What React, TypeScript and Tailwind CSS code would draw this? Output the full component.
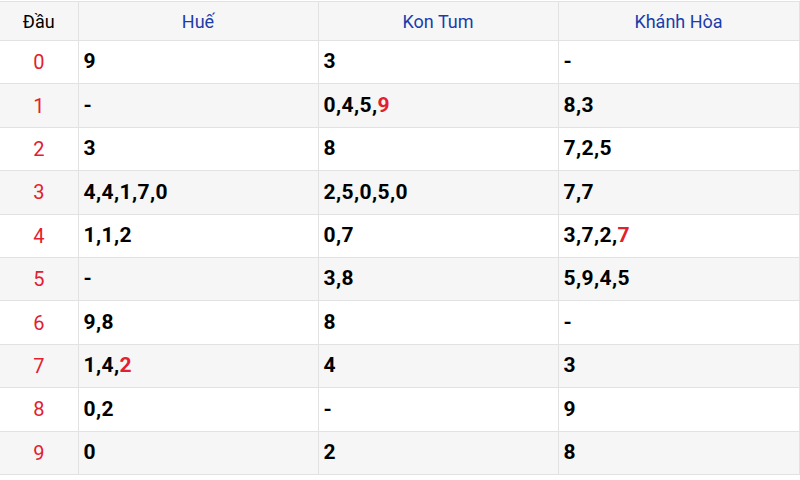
const rows: { head: string; cells: (string | [string, string])[] }[] = [
  { head: "0", cells: ["9", "3", "-"] },
  { head: "1", cells: ["-", ["0,4,5,", "9"], "8,3"] },
  { head: "2", cells: ["3", "8", "7,2,5"] },
  { head: "3", cells: ["4,4,1,7,0", "2,5,0,5,0", "7,7"] },
  { head: "4", cells: ["1,1,2", "0,7", ["3,7,2,", "7"]] },
  { head: "5", cells: ["-", "3,8", "5,9,4,5"] },
  { head: "6", cells: ["9,8", "8", "-"] },
  { head: "7", cells: [["1,4,", "2"], "4", "3"] },
  { head: "8", cells: ["0,2", "-", "9"] },
  { head: "9", cells: ["0", "2", "8"] },
];

function Cell({ value }: { value: string | [string, string] }) {
  if (typeof value === "string") return <>{value}</>;
  return (
    <>
      {value[0]}
      <span className="text-[#e3202e]">{value[1]}</span>
    </>
  );
}

export default function App() {
  return (
    <div
      className="w-[800px] h-[480px] bg-white"
      style={{ fontFamily: "Roboto, 'Noto Sans', sans-serif" }}
    >
      <table className="w-[799px] border-collapse table-fixed mt-px">
        <colgroup>
          <col className="w-[78px]" />
          <col className="w-[240px]" />
          <col className="w-[240px]" />
          <col className="w-[241px]" />
        </colgroup>
        <thead>
          <tr className="bg-[#f6f6f6] h-[39px] text-[18px]">
            <th className="font-normal text-black border-b border-r border-t border-[#e2e2e2]">
              Đầu
            </th>
            <th className="font-normal text-[#1a3dab] border border-[#e2e2e2]">Huế</th>
            <th className="font-normal text-[#1a3dab] border border-[#e2e2e2]">Kon Tum</th>
            <th className="font-normal text-[#1a3dab] border border-[#e2e2e2]">Khánh Hòa</th>
          </tr>
        </thead>
        <tbody>
          {rows.map((r, i) => (
            <tr
              key={r.head}
              className={`h-[43.4px] ${i % 2 === 1 ? "bg-[#f6f6f6]" : "bg-white"}`}
            >
              <td className="text-center text-[20px] text-[#e3202e] border-b border-r border-[#e2e2e2]">
                {r.head}
              </td>
              {r.cells.map((c, j) => (
                <td
                  key={j}
                  className="pl-[5px] text-[21px] tracking-[0.4px] font-bold text-black border border-[#e2e2e2]"
                >
                  <Cell value={c} />
                </td>
              ))}
            </tr>
          ))}
        </tbody>
      </table>
    </div>
  );
}
